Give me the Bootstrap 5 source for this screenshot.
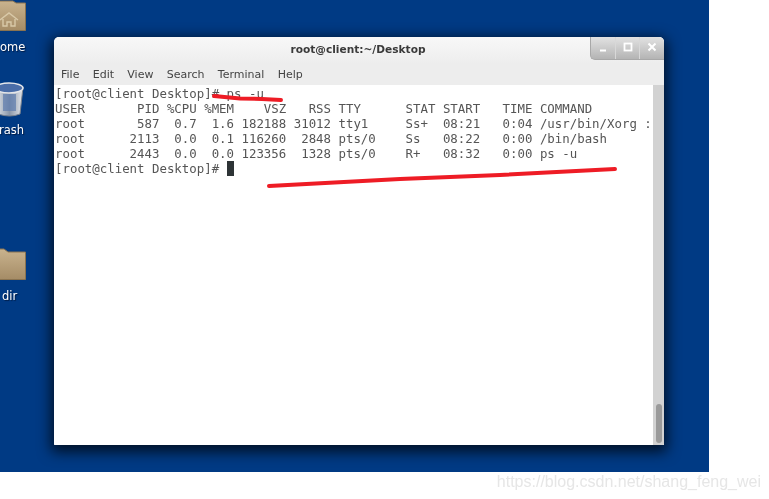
<!DOCTYPE html>
<html lang="en">
<head>
<meta charset="utf-8">
<title>root@client:~/Desktop</title>
<link href="https://cdn.jsdelivr.net/npm/bootstrap@5.3.0/dist/css/bootstrap.min.css" rel="stylesheet">
<style>
html,body{margin:0;height:100%;background:#fff;overflow:hidden}
.desk{width:709px;height:472px;background:#003a84;position:relative;overflow:hidden}
.desk-label{position:absolute;white-space:nowrap;color:#fff;font:11.5px/13px "DejaVu Sans",sans-serif;text-shadow:1px 1px 1px #001a40;filter:blur(.3px)}
.win{position:absolute;left:54px;top:37px;width:610px;height:408px;border-radius:5px 5px 1px 1px;background:#ededed;box-shadow:0 4px 14px 3px rgba(0,0,0,.72);overflow:hidden}
.tbar{height:27px;background:linear-gradient(#f8f8f8,#ededed);position:relative;font:bold 10.6px/25px "DejaVu Sans",sans-serif;color:#3a3a3a;text-align:center;padding-right:2px}
.ttl{filter:blur(.3px)}
.wbtns{position:absolute;top:0;right:0;height:23px;width:74px;background:linear-gradient(#e2e2e2,#b4b4b4);border-radius:0 0 0 5px;border:solid #a8a8a8;border-width:0 0 1px 1px}
.wb{flex:1 1 0;border-left:1px solid #d8d8d8;display:flex;align-items:center;justify-content:center;padding-bottom:2px}
.wb:first-child{border-left:0}
.mbar{height:21px;padding-left:7px;gap:13.3px;font:11px/21px "DejaVu Sans",sans-serif;color:#444;filter:blur(.3px)}
.term{background:#fff;min-height:0}
.term pre{margin:0;padding:1px 0 0 1px;font:12.4px/15px "DejaVu Sans Mono",monospace;color:#555;overflow:hidden;white-space:pre;flex:1 1 0;filter:blur(.35px)}
.cursor{display:inline-block;width:7.5px;height:15px;background:#2e3436;vertical-align:-3px}
.sbar{width:11px;background:#d2d2d2;flex:none;padding:319px 2px 2px}
.thumb{height:39px;width:6px;margin:0 auto;background:#9a9a9a;border-radius:3px}
.ink{position:absolute;left:0;top:0;pointer-events:none}
.mark-wm{position:absolute;right:8px;top:472px;font:16px/20px "Liberation Sans",sans-serif;color:#e6e6e6;white-space:nowrap;filter:blur(.3px)}
</style>
</head>
<body>
<div class="desk">
  <svg class="ink" width="30" height="290" viewBox="0 0 30 290">
    <defs>
      <linearGradient id="fd" x1="0" y1="0" x2="0" y2="1"><stop offset="0" stop-color="#c9b38e"/><stop offset="1" stop-color="#a58c66"/></linearGradient>
      <linearGradient id="bin" x1="0" y1="0" x2="1" y2="0"><stop offset="0" stop-color="#dfe3e8"/><stop offset=".5" stop-color="#8a97aa"/><stop offset="1" stop-color="#e6e8ec"/></linearGradient>
    </defs>
    <path d="M-3 1H13L16 3H25.500V30.500H-3Z" fill="url(#fd)" stroke="#8a7350"/>
    <path d="M0 20L9 13L18 20M3 19V26H7V22H11V26H15V19" fill="none" stroke="#d9c9a8" stroke-width="1.4"/>
    <path d="M-4 87H23L20 114Q10 118 -2 114Z" fill="url(#bin)" stroke="#7b838f"/>
    <ellipse cx="9" cy="88" rx="14" ry="5" fill="#4a6da8" stroke="#e4e6ea" stroke-width="1.5"/>
    <rect x="3" y="94" width="13" height="17" fill="#5e7cae" opacity=".7"/>
    <path d="M-3 249H4L8 252H25.500V279.500H-3Z" fill="url(#fd)" stroke="#8a7350"/>
  </svg>
  <span class="desk-label" style="left:0;top:41px">ome</span>
  <span class="desk-label" style="left:-1px;top:124px">rash</span>
  <span class="desk-label" style="left:2px;top:290px">dir</span>

  <div class="win d-flex flex-column">
    <div class="tbar flex-none"><span class="ttl">root@client:~/Desktop</span>
      <div class="wbtns d-flex">
        <span class="wb"><svg width="10" height="10" viewBox="0 0 10 10"><path d="M2 8.500H8" stroke="#fff" stroke-width="2"/></svg></span>
        <span class="wb"><svg width="10" height="10" viewBox="0 0 10 10"><rect x="1.500" y="1.500" width="7" height="7" fill="none" stroke="#fff" stroke-width="1.800"/></svg></span>
        <span class="wb"><svg width="10" height="10" viewBox="0 0 10 10"><path d="M1.500 1.500L8.500 8.500M8.500 1.500L1.500 8.500" stroke="#fff" stroke-width="2"/></svg></span>
      </div>
    </div>
    <div class="mbar d-flex flex-none"><span>File</span><span>Edit</span><span>View</span><span>Search</span><span>Terminal</span><span>Help</span></div>
    <div class="term d-flex flex-grow-1">
<pre>[root@client Desktop]# ps -u
USER       PID %CPU %MEM    VSZ   RSS TTY      STAT START   TIME COMMAND
root       587  0.7  1.6 182188 31012 tty1     Ss+  08:21   0:04 /usr/bin/Xorg :
root      2113  0.0  0.1 116260  2848 pts/0    Ss   08:22   0:00 /bin/bash
root      2443  0.0  0.0 123356  1328 pts/0    R+   08:32   0:00 ps -u
[root@client Desktop]# <span class="cursor"></span></pre>
      <div class="sbar"><div class="thumb"></div></div>
    </div>
  </div>
  <svg class="ink" width="709" height="472" viewBox="0 0 709 472">
    <path d="M214 96L240 98.500L262 99L281 100" fill="none" stroke="#ee1c25" stroke-width="4" stroke-linecap="round"/>
    <path d="M269 186L400 179L500 175L615 169" fill="none" stroke="#ee1c25" stroke-width="4" stroke-linecap="round"/>
  </svg>
</div>
<div class="mark-wm">https://blog.csdn.net/shang_feng_wei</div>
</body>
</html>
